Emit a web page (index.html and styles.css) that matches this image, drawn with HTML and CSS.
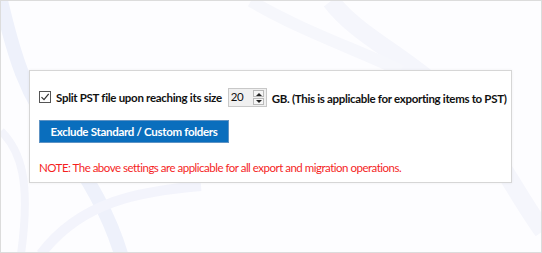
FILE: index.html
```html
<!DOCTYPE html>
<html lang="en">
<head>
  <meta charset="UTF-8">
  <title>Export Settings</title>
  <link rel="stylesheet" href="styles.css">
</head>
<body>
  <div class="frame">
    <svg class="swirl" width="542" height="253" viewBox="0 0 542 253">
      <path d="M0 0 C10 40 20 90 60 140 C90 180 110 220 120 253" stroke="#eef1fb" stroke-width="14" fill="none"/>
      <path d="M40 253 C80 200 140 190 200 185" stroke="#f3f4fc" stroke-width="10" fill="none"/>
      <path d="M330 0 C360 40 420 60 470 120 C500 160 520 200 542 230" stroke="#f5f6fc" stroke-width="18" fill="none"/>
      <path d="M250 0 C300 30 360 50 400 70" stroke="#f6f7fc" stroke-width="12" fill="none"/>
      <path d="M0 130 C20 150 30 180 20 253" stroke="#f3f4fb" stroke-width="8" fill="none"/>
    </svg>

    <div class="panel">
      <div class="row">
        <label class="check">
          <span class="box">
            <svg width="10" height="10" viewBox="0 0 10 10"><path d="M1.5 5.2 L4 7.7 L8.7 1.8" stroke="#333" stroke-width="1.2" fill="none"/></svg>
          </span>
          Split PST file upon reaching its size
        </label>
        <div class="spin">
          <span class="spin-val">20</span>
          <span class="spin-btns">
            <span class="arrow up"></span>
            <span class="arrow down"></span>
          </span>
        </div>
        <span class="hint">GB. (This is applicable for exporting items to PST)</span>
      </div>

      <button class="exclude" type="button">Exclude Standard / Custom folders</button>

      <p class="note">NOTE: The above settings are applicable for all export and migration operations.</p>
    </div>
  </div>
</body>
</html>
```

FILE: styles.css
```css
body {
  margin: 0;
  font-family: 'Lato', 'Open Sans', sans-serif;
  font-size: 11.5px;
  letter-spacing: -0.3px;
  color: #111;
  white-space: nowrap;
}

.frame {
  position: relative;
  width: 542px;
  height: 253px;
  box-sizing: border-box;
  border: 1px solid #dcdcdc;
  background: #fdfdff;
  overflow: hidden;
  padding: 69px 0 0 28px;
}

.swirl {
  position: absolute;
  left: 0;
  top: 0;
}

.panel {
  position: relative;
  width: 483px;
  height: 113px;
  box-sizing: border-box;
  background: #fff;
  border: 1px solid #d6d6d6;
  box-shadow: 0 0 3px rgba(0, 0, 0, 0.06);
  padding: 16px 0 0 9px;
}

.row {
  display: flex;
  align-items: center;
  height: 20px;
}

.check {
  display: flex;
  align-items: center;
  gap: 5px;
  font-weight: bold;
}

.box {
  width: 10px;
  height: 10px;
  border: 1px solid #555;
  display: flex;
  align-items: center;
  justify-content: center;
}

.spin {
  display: flex;
  margin-left: 6px;
  width: 39px;
  height: 19px;
  box-sizing: border-box;
  border: 1px solid #c8c8c8;
  background: #f0f0f0;
}

.spin-val {
  flex: 1;
  padding: 1px 0 0 2px;
}

.spin-btns {
  display: flex;
  flex-direction: column;
  justify-content: center;
  gap: 1px;
  width: 11px;
  margin: 1px 2px 1px 0;
}

.arrow {
  flex: 1;
  border: 1px solid #b9b9b9;
  background: #f6f6f6;
  position: relative;
}

.arrow::after {
  content: '';
  position: absolute;
  left: 2px;
  top: 2px;
  border-left: 3px solid transparent;
  border-right: 3px solid transparent;
}

.up::after {
  border-bottom: 3px solid #222;
}

.down::after {
  top: 1px;
  border-top: 3px solid #222;
}

.hint {
  margin-left: 5px;
  font-weight: bold;
  padding-top: 3px;
  letter-spacing: -0.32px;
}

.exclude {
  display: block;
  margin-top: 13px;
  width: 190px;
  height: 23px;
  background: #0a6ebd;
  border: 1px solid #5e93c4;
  color: #fff;
  font-family: inherit;
  font-size: 11.5px;
  letter-spacing: -0.3px;
  font-weight: bold;
  padding: 0;
}

.note {
  margin: 18px 0 0;
  color: #f51f1f;
  letter-spacing: -0.5px;
}
```
